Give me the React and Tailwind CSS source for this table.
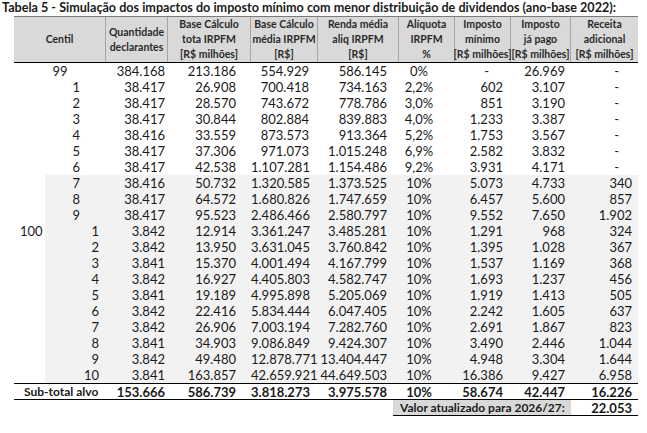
import React from "react";

const rows = [
  { a: "99", g: "top", v: ["384.168", "213.186", "554.929", "586.145", "0%", "-", "26.969", "-"] },
  { a: "1", g: "A", v: ["38.417", "26.908", "700.418", "734.163", "2,2%", "602", "3.107", "-"] },
  { a: "2", g: "A", v: ["38.417", "28.570", "743.672", "778.786", "3,0%", "851", "3.190", "-"] },
  { a: "3", g: "A", v: ["38.417", "30.844", "802.884", "839.883", "4,0%", "1.233", "3.387", "-"] },
  { a: "4", g: "A", v: ["38.416", "33.559", "873.573", "913.364", "5,2%", "1.753", "3.567", "-"] },
  { a: "5", g: "A", v: ["38.417", "37.306", "971.073", "1.015.248", "6,9%", "2.582", "3.832", "-"] },
  { a: "6", g: "A", v: ["38.417", "42.538", "1.107.281", "1.154.486", "9,2%", "3.931", "4.171", "-"] },
  { a: "7", g: "A", s: true, v: ["38.416", "50.732", "1.320.585", "1.373.525", "10%", "5.073", "4.733", "340"] },
  { a: "8", g: "A", s: true, v: ["38.417", "64.572", "1.680.826", "1.747.659", "10%", "6.457", "5.600", "857"] },
  { a: "9", g: "A", s: true, v: ["38.417", "95.523", "2.486.466", "2.580.797", "10%", "9.552", "7.650", "1.902"] },
  { a: "1", g: "B", s: true, lead: "100", v: ["3.842", "12.914", "3.361.247", "3.485.281", "10%", "1.291", "968", "324"] },
  { a: "2", g: "B", s: true, v: ["3.842", "13.950", "3.631.045", "3.760.842", "10%", "1.395", "1.028", "367"] },
  { a: "3", g: "B", s: true, v: ["3.841", "15.370", "4.001.494", "4.167.799", "10%", "1.537", "1.169", "368"] },
  { a: "4", g: "B", s: true, v: ["3.842", "16.927", "4.405.803", "4.582.747", "10%", "1.693", "1.237", "456"] },
  { a: "5", g: "B", s: true, v: ["3.841", "19.189", "4.995.898", "5.205.069", "10%", "1.919", "1.413", "505"] },
  { a: "6", g: "B", s: true, v: ["3.842", "22.416", "5.834.444", "6.047.405", "10%", "2.242", "1.605", "637"] },
  { a: "7", g: "B", s: true, v: ["3.842", "26.906", "7.003.194", "7.282.760", "10%", "2.691", "1.867", "823"] },
  { a: "8", g: "B", s: true, v: ["3.841", "34.903", "9.086.849", "9.424.307", "10%", "3.490", "2.446", "1.044"] },
  { a: "9", g: "B", s: true, v: ["3.842", "49.480", "12.878.771", "13.404.447", "10%", "4.948", "3.304", "1.644"] },
  { a: "10", g: "B", s: true, v: ["3.841", "163.857", "42.659.921", "44.649.503", "10%", "16.386", "9.427", "6.958"] },
];

const colW = [
  "w-[62px]",
  "w-[83px]",
  "w-[67px]",
  "w-[81px]",
  "w-[56px]",
  "w-[56px]",
  "w-[60px]",
  "w-[67px]",
];

const bodyPad = [
  "pr-[3px] text-right",
  "pr-[15px] text-right",
  "pr-[9px] text-right",
  "pr-[12px] text-right",
  "pr-[16px] text-center",
  "pr-[8px] text-right",
  "pr-[6px] text-right",
  "pr-[6px] text-right",
];

const dashPad = {
  5: "pr-[22px] text-right",
  7: "pr-[19px] text-right",
};

function Cell({ i, val }) {
  let pad = bodyPad[i];
  if (val === "-" && dashPad[i]) pad = dashPad[i];
  return <div className={`${colW[i]} ${pad} shrink-0 whitespace-nowrap`}>{val}</div>;
}

const headers = [
  ["Quantidade", "declarantes"],
  ["Base Cálculo", "tota IRPFM", "[R$ milhões]"],
  ["Base Cálculo", "média IRPFM", "[R$]"],
  ["Renda média", "aliq IRPFM", "[R$]"],
  ["Alíquota", "IRPFM", "%"],
  ["Imposto", "mínimo", "[R$ milhões]"],
  ["Imposto", "já pago", "[R$ milhões]"],
  ["Receita", "adicional", "[R$ milhões]"],
];

export default function App() {
  return (
    <div
      className="w-[647px] h-[433px] bg-white text-[#1a1a1a] overflow-hidden"
      style={{ fontFamily: "Lato, 'Liberation Sans', sans-serif" }}
    >
      <div className="h-[16px] pl-[2px] text-[12.6px] leading-[16px] font-bold whitespace-nowrap">
        Tabela 5 - Simulação dos impactos do imposto mínimo com menor distribuição de dividendos (ano-base 2022):
      </div>
      <div className="ml-[14px] w-[624px]">
        {/* header */}
        <div className="flex h-[47px] bg-[#d9d9d9] border-t border-[#7a7a7a] border-b border-b-black text-[10.5px] leading-[15px] font-bold text-[#2a2a2a]">
          <div className="w-[92px] shrink-0 flex items-center justify-center border-r border-[#a6a6a6]">Centil</div>
          {headers.map((h, i) => (
            <div
              key={i}
              className={`${colW[i]} shrink-0 flex flex-col items-center justify-center ${i < 7 ? "border-r border-[#a6a6a6]" : ""}`}
            >
              {h.map((t, j) => (
                <div key={j} className="whitespace-nowrap">{t}</div>
              ))}
            </div>
          ))}
        </div>
        {/* body */}
        <div className="text-[13px] leading-[16px]">
          {rows.map((r, k) => (
            <div key={k} className="flex h-[16px]">
              {r.g === "top" ? (
                <div className="w-[92px] shrink-0 text-center">{r.a}</div>
              ) : (
                <div className="w-[31px] shrink-0 pl-[6px]">{r.lead || ""}</div>
              )}
              <div className={`flex ${r.s ? "bg-[#f2f2f2]" : ""}`}>
                {r.g !== "top" && (
                  <div className={`w-[61px] shrink-0 text-right ${r.g === "A" ? "pr-[26px]" : "pr-[7px]"}`}>{r.a}</div>
                )}
                {r.v.map((val, i) => (
                  <Cell key={i} i={i} val={val} />
                ))}
              </div>
            </div>
          ))}
          {/* subtotal */}
          <div className="flex h-[17px] border-t border-b border-black font-bold">
            <div className="w-[92px] shrink-0 pl-[10px] text-[12px] whitespace-nowrap">Sub-total alvo</div>
            {["153.666", "586.739", "3.818.273", "3.975.578", "10%", "58.674", "42.447", "16.226"].map((val, i) => (
              <Cell key={i} i={i} val={val} />
            ))}
          </div>
          <div className="flex h-[16px] font-bold">
            <div className="w-[379px] shrink-0" />
            <div className="w-[178px] shrink-0 bg-[#d9d9d9] pl-[7px] border-b border-black whitespace-nowrap text-[12px]">
              Valor atualizado para 2026/27:
            </div>
            <div className="w-[67px] shrink-0 pr-[6px] text-right border-b border-black">22.053</div>
          </div>
        </div>
      </div>
    </div>
  );
}
